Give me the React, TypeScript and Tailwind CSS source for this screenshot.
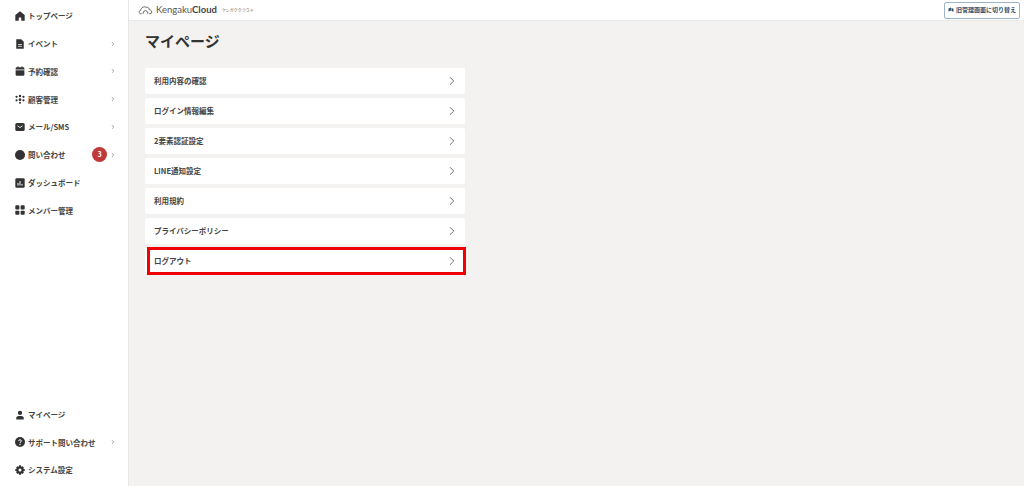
import { ChevronRight } from "lucide-react";
import type { ReactNode } from "react";

const font = { fontFamily: '"Noto Sans CJK JP", "Noto Sans", sans-serif' };

type NavItem = {
  label: string;
  icon: ReactNode;
  arrow?: boolean;
  badge?: number;
};

const Svg = ({ children }: { children: ReactNode }) => (
  <svg viewBox="0 0 16 16" className="h-[10px] w-[10px] shrink-0" fill="#333">
    {children}
  </svg>
);

const topNav: NavItem[] = [
  {
    label: "トップページ",
    icon: (
      <Svg>
        <path d="M8 0.5 L15.5 6.5 V15.5 H10 V10.5 H6 V15.5 H0.5 V6.5 Z" />
      </Svg>
    ),
  },
  {
    label: "イベント",
    arrow: true,
    icon: (
      <Svg>
        <path d="M2 0.5 H10 L14 4.5 V15.5 H2 Z" />
        <rect x="5" y="8" width="6" height="1.2" fill="#fff" />
        <rect x="5" y="11" width="6" height="1.2" fill="#fff" />
      </Svg>
    ),
  },
  {
    label: "予約確認",
    arrow: true,
    icon: (
      <Svg>
        <rect x="4" y="0.5" width="1.6" height="3" />
        <rect x="10.4" y="0.5" width="1.6" height="3" />
        <path d="M1 4 a2 2 0 0 1 2-2 H13 a2 2 0 0 1 2 2 V5.5 H1 Z" />
        <path d="M1 6.8 H15 V13.5 a2 2 0 0 1-2 2 H3 a2 2 0 0 1-2-2 Z" />
      </Svg>
    ),
  },
  {
    label: "顧客管理",
    arrow: true,
    icon: (
      <Svg>
        <circle cx="8" cy="3" r="2" />
        <circle cx="2.5" cy="4.5" r="1.8" />
        <circle cx="13.5" cy="4.5" r="1.8" />
        <circle cx="8" cy="9" r="2.2" />
        <circle cx="2.5" cy="10" r="1.8" />
        <circle cx="13.5" cy="10" r="1.8" />
        <circle cx="8" cy="14" r="1.6" />
      </Svg>
    ),
  },
  {
    label: "メール/SMS",
    arrow: true,
    icon: (
      <Svg>
        <rect x="0.5" y="1.5" width="15" height="13" rx="2.5" />
        <path d="M4 6 L8 9 L12 6" fill="none" stroke="#fff" strokeWidth="1.4" />
      </Svg>
    ),
  },
  {
    label: "問い合わせ",
    arrow: true,
    badge: 3,
    icon: (
      <Svg>
        <circle cx="8" cy="8" r="8" />
      </Svg>
    ),
  },
  {
    label: "ダッシュボード",
    icon: (
      <Svg>
        <rect x="0.5" y="0.5" width="15" height="15" rx="2" />
        <rect x="4" y="8" width="1.6" height="4" fill="#fff" />
        <rect x="7.2" y="5" width="1.6" height="7" fill="#fff" />
        <rect x="10.4" y="9.5" width="1.6" height="2.5" fill="#fff" />
      </Svg>
    ),
  },
  {
    label: "メンバー管理",
    icon: (
      <Svg>
        <rect x="0.5" y="0.5" width="6.5" height="6.5" rx="1.2" />
        <rect x="9" y="0.5" width="6.5" height="6.5" rx="1.2" />
        <rect x="0.5" y="9" width="6.5" height="6.5" rx="1.2" />
        <rect x="9" y="9" width="6.5" height="6.5" rx="1.2" />
      </Svg>
    ),
  },
];

const bottomNav: NavItem[] = [
  {
    label: "マイページ",
    icon: (
      <Svg>
        <circle cx="8" cy="4.5" r="3.5" />
        <path d="M2 15 V12.5 C2 10.5 4 9.5 8 9.5 C12 9.5 14 10.5 14 12.5 V15 Z" />
      </Svg>
    ),
  },
  {
    label: "サポート問い合わせ",
    arrow: true,
    icon: (
      <Svg>
        <circle cx="8" cy="8" r="8" />
        <path
          d="M5.8 6.2 C5.8 3.8 10.2 3.8 10.2 6.2 C10.2 7.8 8 7.8 8 9.5"
          fill="none"
          stroke="#fff"
          strokeWidth="1.6"
        />
        <circle cx="8" cy="12" r="1.1" fill="#fff" />
      </Svg>
    ),
  },
  {
    label: "システム設定",
    icon: (
      <Svg>
        <path
          fillRule="evenodd"
          d="M6.5 0.5 H9.5 L10 2.8 L12 1.8 L14.2 4 L13.2 6 L15.5 6.5 V9.5 L13.2 10 L14.2 12 L12 14.2 L10 13.2 L9.5 15.5 H6.5 L6 13.2 L4 14.2 L1.8 12 L2.8 10 L0.5 9.5 V6.5 L2.8 6 L1.8 4 L4 1.8 L6 2.8 Z M8 5.6 A2.4 2.4 0 1 0 8 10.4 A2.4 2.4 0 1 0 8 5.6 Z"
        />
      </Svg>
    ),
  },
];

const menu = [
  "利用内容の確認",
  "ログイン情報編集",
  "2要素認証設定",
  "LINE通知設定",
  "利用規約",
  "プライバシーポリシー",
  "ログアウト",
];

function SideLink({ item }: { item: NavItem }) {
  return (
    <div className="relative flex h-[27.8px] items-center gap-[3px] pl-[15px] pr-[12px]">
      {item.icon}
      <span className="whitespace-nowrap text-[7.5px] font-bold leading-none text-[#444]">
        {item.label}
      </span>
      {item.badge && (
        <span className="absolute left-[92px] top-[6px] flex h-[15px] w-[15px] items-center justify-center rounded-full bg-[#c0393b] text-[7px] font-bold text-white">
          {item.badge}
        </span>
      )}
      {item.arrow && (
        <ChevronRight className="ml-auto h-[6px] w-[6px] text-[#666]" strokeWidth={2.5} />
      )}
    </div>
  );
}

export default function App() {
  return (
    <div className="flex h-[486px] w-[1024px] overflow-hidden bg-[#f3f2f0]" style={font}>
      <aside className="flex w-[129px] shrink-0 flex-col justify-between border-r border-[#e6e6e6] bg-white pb-[2px] pt-[2px]">
        <nav>
          {topNav.map((item) => (
            <SideLink key={item.label} item={item} />
          ))}
        </nav>
        <nav>
          {bottomNav.map((item) => (
            <SideLink key={item.label} item={item} />
          ))}
        </nav>
      </aside>

      <div className="flex min-w-0 flex-1 flex-col">
        <header className="flex h-[21px] items-center justify-between border-b border-[#e9e9e9] bg-white pl-[9px] pr-[4px]">
          <div className="flex items-center gap-[3px]">
            <svg viewBox="0 0 20 12" className="h-[10px] w-[15px]" fill="none" stroke="#555" strokeWidth="1.2">
              <path d="M5 11 H4 C1 11 0.5 7 3.5 6.5 C4 3 8 0.5 11 2.5 C13 1.5 15 3.5 15 5.5 C18.5 5.5 20 11 16 11 H15" />
              <path d="M7 11 V8.5 L10 6.5 L13 8.5 V11" />
            </svg>
            <span className="text-[9.5px] leading-none text-[#555]" style={{ fontFamily: "Lato, sans-serif" }}>
              Kengaku<span className="font-bold text-[#444]">Cloud</span>
            </span>
            <span className="ml-[2px] whitespace-nowrap text-[4px] leading-none text-[#666]">ケンガククラウド</span>
          </div>
          <button className="flex h-[17px] w-[76px] items-center justify-center gap-[2px] whitespace-nowrap rounded-[2px] border border-[#9db4c6] bg-white text-[6px] font-bold leading-none text-[#33506a]">
            <svg viewBox="0 0 12 12" className="h-[6px] w-[6px]" fill="#33506a">
              <path d="M1 3 L6 1 V7 L1 9 Z M7 2 L11 3.5 V9.5 L7 8 Z" />
            </svg>
            旧管理画面に切り替え
          </button>
        </header>

        <main className="pl-[16px] pt-[9px]">
          <h1 className="text-[15px] font-bold leading-[21px] text-[#333]">マイページ</h1>
          <ul className="mt-[17px] flex w-[320px] flex-col gap-[4px]">
            {menu.map((label) => (
              <li
                key={label}
                className="relative flex h-[26px] items-center justify-between rounded-[2px] bg-white pl-[9px] pr-[6px]"
              >
                <span className="text-[7.5px] font-bold leading-none text-[#444]">{label}</span>
                <ChevronRight className="h-[14px] w-[14px] text-[#666]" strokeWidth={1.6} />
                {label === "ログアウト" && (
                  <div className="absolute -bottom-px -right-px -top-px left-[2px] border-[3px] border-[#f00000]" />
                )}
              </li>
            ))}
          </ul>
        </main>
      </div>
    </div>
  );
}
